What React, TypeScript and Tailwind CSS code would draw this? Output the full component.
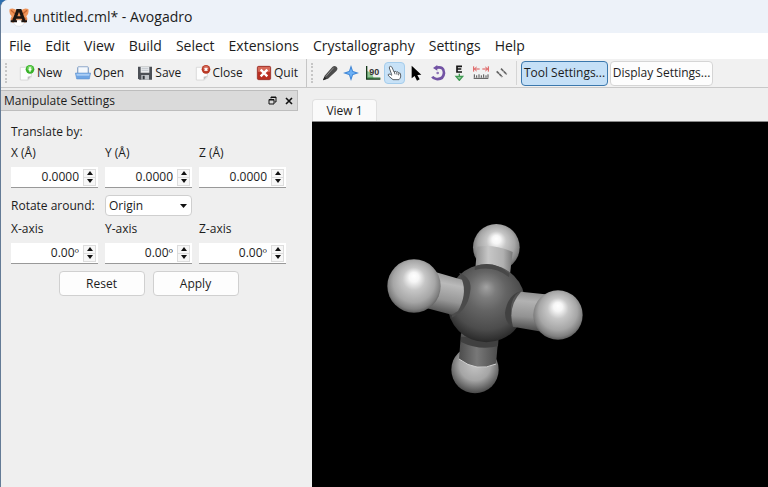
import { useState, type ReactNode } from "react";

const menus = ["File", "Edit", "View", "Build", "Select", "Extensions", "Crystallography", "Settings", "Help"];

function AppLogo() {
  return (
    <svg width="20" height="20" viewBox="0 0 60 60" aria-hidden="true">
      <path d="M2 6 Q16 0 26 14 L34 14 Q44 0 58 6 Q61 20 52 28 Q60 40 48 48 L12 48 Q0 40 8 28 Q-1 20 2 6Z" fill="#ee9358" />
      <path d="M6 10 L20 22 M54 10 L40 22 M8 38 L18 30 M52 38 L42 30" stroke="#c0622e" strokeWidth="4" />
      <path d="M14 44 Q30 34 46 44 Q45 58 30 58 Q15 58 14 44Z" fill="#fff" stroke="#d5d9df" strokeWidth="2" />
      <path d="M22 6 H37 L49 40 H54 V46 H37 V40 H40 L38 35 H22 L20 40 H24 V46 H5 V40 H10 L21 11Z M30 15 L25 28 H35Z" fill="#1c1511" fillRule="evenodd" />
    </svg>
  );
}

function PageIcon({ close = false }: { close?: boolean }) {
  return (
    <svg width="16" height="16" viewBox="0 0 48 48" aria-hidden="true">
      <path d="M4 7 H37 V36 L28 45 H4Z" fill="#fdfdfd" stroke="#cdcdcd" strokeWidth="2" />
      <path d="M37 33 L26 45 V35Z" fill="#bdbdbd" />
      <circle cx="33" cy="13" r="13" fill={close ? "#b93a26" : "#38b229"} />
      <circle cx="33" cy="10" r="8" fill={close ? "#d3695a" : "#78d764"} />
      {close ? <path d="M29 9 L37 17 M37 9 L29 17" stroke="#fff" strokeWidth="4" /> : <path d="M33 6 V20 M29 13 H37" stroke="#fff" strokeWidth="4" />}
    </svg>
  );
}

function OpenIcon() {
  return (
    <svg width="16" height="16" viewBox="0 0 48 48" aria-hidden="true">
      <path d="M6 8 L10 4 H38 L42 8 V28 H6Z" fill="#8fa9cb" />
      <path d="M10 7 H38 V26 H10Z" fill="#f4f8fc" />
      <path d="M1 24 H47 L43 42 H5Z" fill="#6fa5e4" stroke="#568bc8" strokeWidth="1.5" />
      <path d="M4 26 H44 L43 32 H5Z" fill="#a9cdf5" />
    </svg>
  );
}

function SaveIcon() {
  return (
    <svg width="16" height="16" viewBox="0 0 48 48" aria-hidden="true">
      <path d="M3 5 H45 V44 H7 L3 40Z" fill="#4b4f55" />
      <path d="M11 5 H37 V23 H11Z" fill="#e8eaed" />
      <path d="M14 10 H34 M14 16 H34" stroke="#a9b0b8" strokeWidth="2" />
      <path d="M13 30 H36 V44 H13Z" fill="#c0c4c9" />
      <path d="M17 32 H23 V43 H17Z" fill="#33373c" />
    </svg>
  );
}

function QuitIcon() {
  return (
    <svg width="16" height="16" viewBox="0 0 48 48" aria-hidden="true">
      <rect x="4" y="4" width="40" height="40" rx="4" fill="#b92f22" stroke="#8c2018" strokeWidth="2" />
      <path d="M6 6 H42 V20 Q24 24 6 20Z" fill="#d76958" />
      <path d="M14 14 L34 34 M34 14 L14 34" stroke="#fff" strokeWidth="7" />
    </svg>
  );
}

const tools: { name: string; icon: ReactNode }[] = [
  { name: "Draw", icon: <><path d="M3 46 L8 32 L31 6 Q37 0 44 6 Q49 12 43 18 L18 41Z" fill="#4c4c4c" /><path d="M12 34 L35 8" stroke="#8c8c8c" strokeWidth="3" /><path d="M3 46 L7 35 L14 41Z" fill="#222" /></> },
  { name: "Navigate", icon: <><path d="M24 0 L30 18 L48 24 L30 30 L24 48 L18 30 L0 24 L18 18Z" fill="#3d84d4" /><path d="M24 9 L28 20 L39 24 L28 28 L24 39 L20 28 L9 24 L20 20Z" fill="#6bb0f5" /></> },
  { name: "Bond-centric", icon: <><path d="M6 42 V18 Q24 22 26 42Z" fill="#8fc695" /><path d="M5 3 V42 H46" fill="none" stroke="#16391b" strokeWidth="4" /><path d="M7 39 H46" stroke="#2e7a38" strokeWidth="3" /><text x="13" y="29" fontSize="27" fontWeight="700" fill="#353535" fontFamily="Liberation Sans, sans-serif">90</text></> },
  { name: "Manipulate", icon: <path d="M17 29 L10 9 Q9 4 14 4 Q17 4 19 9 L24 21 Q27 16 31 21 Q36 18 38 24 Q44 22 44 30 V36 Q42 41 39 44 H21 L8 33 Q4 28 9 27 Q13 27 17 31Z M25 21 L27 28 M32 22 L33 29 M38 25 V31" fill="#fff" stroke="#5c6268" strokeWidth="3" /> },
  { name: "Select", icon: <path d="M11 2 V40 L20 33 L27 47 L35 43 L28 30 L40 29Z" fill="#000" /> },
  { name: "Auto rotate", icon: <><path d="M19 8 Q42 3 42 24 Q40 44 19 42 Q10 41 7 35" fill="none" stroke="#7253a4" strokeWidth="8" /><path d="M22 0 V17 L9 9Z" fill="#7253a4" /><circle cx="23" cy="24" r="4" fill="#8d75b5" /></> },
  { name: "Optimize", icon: <><path d="M33 4 H18 V21 H33 M18 12 H31" fill="none" stroke="#151515" strokeWidth="5" /><path d="M25 26 V32 M25 46 L15 34 H35Z" fill="#8fcb9b" stroke="#3f9a52" strokeWidth="4" /></> },
  { name: "Measure", icon: <><path d="M2 4 V20 M46 4 V20 M4 12 H20 M28 12 H44 M11 6 L4 12 L11 18 M37 6 L44 12 L37 18" fill="none" stroke="#dd5555" strokeWidth="3" /><path d="M2 40 H46 M4 28 V38 M11 31 V38 M18 28 V38 M25 31 V38 M32 28 V38 M39 31 V38 M45 28 V38" stroke="#4c4c4c" strokeWidth="3" /></> },
  { name: "Align", icon: <path d="M8 19 L25 36 M21 11 L38 28" stroke="#646464" strokeWidth="5" strokeDasharray="10 1" /> },
];

function Grip() {
  return <div className="h-5 border-l-2 border-dotted border-[#c6c6c6]" />;
}

function SpinBox({ id, label, initial, unit, digits }: { id: string; label: string; initial: number; unit: string; digits: number }) {
  const [value, setValue] = useState(initial.toFixed(digits) + unit);
  const step = (amount: number) => setValue(((parseFloat(value) || 0) + amount).toFixed(digits) + unit);
  return (
    <div className="w-[87px]">
      <label htmlFor={id} className="block h-6 leading-5">{label}</label>
      <div className="flex h-[21px] items-center border-b border-[#999] bg-white pr-0.5">
        <input id={id} value={value} onChange={(e) => setValue(e.target.value)} className="w-0 grow bg-transparent pr-1 text-right outline-none" />
        <div className="flex h-[17px] w-[13px] flex-col border border-[#ddd] bg-[#f7f7f7]">
          <button type="button" aria-label={`Increase ${label}`} onClick={() => step(1)} className="flex flex-1 items-center justify-center border-b border-[#ddd]">
            <svg width="6" height="4" viewBox="0 0 6 4"><path d="M0 4 L3 0 L6 4Z" fill="#111" /></svg>
          </button>
          <button type="button" aria-label={`Decrease ${label}`} onClick={() => step(-1)} className="flex flex-1 items-center justify-center">
            <svg width="6" height="4" viewBox="0 0 6 4"><path d="M0 0 L3 4 L6 0Z" fill="#111" /></svg>
          </button>
        </div>
      </div>
    </div>
  );
}

function Methane() {
  return (
    <svg width="230" height="200" viewBox="0 0 690 600" role="img" aria-label="Ball and stick model of methane">
      <defs>
        <radialGradient id="hydrogen" cx="50%" cy="46%" r="56%" fx="50%" fy="31%">
          <stop offset="0" stopColor="#fff" />
          <stop offset=".16" stopColor="#f6f6f6" />
          <stop offset=".38" stopColor="#c6c6c6" />
          <stop offset=".7" stopColor="#a6a6a6" />
          <stop offset=".88" stopColor="#808080" />
          <stop offset="1" stopColor="#505050" />
        </radialGradient>
        <radialGradient id="lowerHydrogen" cx="50%" cy="40%" r="60%">
          <stop offset="0" stopColor="#c4c4c4" />
          <stop offset=".55" stopColor="#a5a5a5" />
          <stop offset="1" stopColor="#484848" />
        </radialGradient>
        <radialGradient id="carbon" cx="50%" cy="42%" r="60%" fx="50%" fy="29%">
          <stop offset="0" stopColor="#a2a2a2" />
          <stop offset=".2" stopColor="#7c7c7c" />
          <stop offset=".42" stopColor="#646464" />
          <stop offset=".75" stopColor="#4c4c4c" />
          <stop offset="1" stopColor="#242424" />
        </radialGradient>
        <linearGradient id="leftBond" gradientUnits="userSpaceOnUse" x1="240" y1="192" x2="215" y2="312">
          <stop offset="0" stopColor="#969696" />
          <stop offset=".25" stopColor="#bababa" />
          <stop offset=".65" stopColor="#969696" />
          <stop offset="1" stopColor="#4c4c4c" />
        </linearGradient>
        <linearGradient id="rightBond" gradientUnits="userSpaceOnUse" x1="480" y1="245" x2="470" y2="362">
          <stop offset="0" stopColor="#8c8c8c" />
          <stop offset=".25" stopColor="#b2b2b2" />
          <stop offset=".65" stopColor="#929292" />
          <stop offset="1" stopColor="#4a4a4a" />
        </linearGradient>
        <linearGradient id="topBond" x1="0" y1="0" x2="1" y2="0">
          <stop offset="0" stopColor="#8a8a8a" />
          <stop offset=".35" stopColor="#c7c7c7" />
          <stop offset=".75" stopColor="#b0b0b0" />
          <stop offset="1" stopColor="#777" />
        </linearGradient>
        <linearGradient id="bottomBond" x1="0" y1="0" x2="1" y2="0">
          <stop offset="0" stopColor="#4c4c4c" />
          <stop offset=".45" stopColor="#787878" />
          <stop offset="1" stopColor="#4a4a4a" />
        </linearGradient>
      </defs>
      <circle cx="379" cy="112" r="70" fill="url(#hydrogen)" />
      <path d="M322 110 Q375 102 428 126 L419 200 L315 185Z" fill="url(#topBond)" />
      <circle cx="315" cy="479" r="71" fill="url(#lowerHydrogen)" />
      <path d="M273 370 H386 L378 462 Q323 488 267 447Z" fill="url(#bottomBond)" />
      <path d="M273 380 H386 L384 409 Q326 422 273 396Z" fill="#404040" />
      <path d="M267 447 Q320 488 378 462" fill="none" stroke="#d2d2d2" strokeWidth="3" />
      <circle cx="349" cy="280" r="117" fill="url(#carbon)" />
      <path d="M315 169 Q370 148 418 191 L417 201 Q370 165 314 180Z" fill="#484848" />
      <path d="M268 188 Q310 205 300 248 Q293 300 245 323 L249 300 Q292 256 268 188Z" fill="#4b4b4b" />
      <path d="M196 186 L276 209 Q292 252 264 303 L245 314 L160 292Z" fill="url(#leftBond)" />
      <circle cx="132" cy="228" r="80" fill="url(#hydrogen)" />
      <path d="M454 244 Q414 252 405 308 Q406 344 434 352 L446 350 Q415 315 425 280 Q433 250 454 244Z" fill="#414141" />
      <path d="M453 245 L525 253 L520 366 L429 350 Q412 291 453 245Z" fill="url(#rightBond)" />
      <circle cx="564" cy="315" r="74" fill="url(#hydrogen)" />
    </svg>
  );
}

export default function App() {
  const [tool, setTool] = useState("Manipulate");
  const actions = [
    { label: "New", icon: <PageIcon /> },
    { label: "Open", icon: <OpenIcon /> },
    { label: "Save", icon: <SaveIcon /> },
    { label: "Close", icon: <PageIcon close /> },
    { label: "Quit", icon: <QuitIcon /> },
  ];
  return (
    <div className="h-screen bg-[#2d6fb0]">
      <div className="flex h-full flex-col overflow-hidden rounded-tl-lg border-l border-[#647b96] bg-[#efefef] font-['Open_Sans',sans-serif] text-xs text-[#1c1c1c]">
        <header className="flex h-[33px] shrink-0 items-center gap-1 bg-[#edf2f9] pl-2">
          <AppLogo />
          <h1 className="text-sm">untitled.cml* - Avogadro</h1>
        </header>
        <nav className="flex h-[26px] shrink-0 items-center gap-3.5 bg-white pl-2 text-sm">
          {menus.map((m) => <button key={m} type="button">{m}</button>)}
        </nav>
        <div className="flex h-[29px] shrink-0 items-center border-b border-[#c8c8c8] bg-[#f1f1f1] pl-1">
          <Grip />
          <div className="flex w-[291px] items-center justify-between pl-3">
            {actions.map((a) => (
              <button key={a.label} type="button" className="flex items-center gap-0.5">{a.icon}{a.label}</button>
            ))}
          </div>
          <div className="mr-1 ml-2 h-7 border-l border-[#c6c6c6]" />
          <Grip />
          <div className="ml-1.5 grid w-[194px] grid-cols-9">
            {tools.map((t) => (
              <button key={t.name} type="button" aria-label={t.name} aria-pressed={tool === t.name} onClick={() => setTool(t.name)} className={`flex h-[22px] items-center justify-center rounded-sm border ${tool === t.name ? "border-[#a5cdec] bg-[#c8e2f7]" : "border-transparent"}`}>
                <svg width="16" height="16" viewBox="0 0 48 48" className="shrink-0" aria-hidden="true">{t.icon}</svg>
              </button>
            ))}
          </div>
          <div className="mr-1 ml-[3px] h-6 border-l border-[#d5d5d5]" />
          <button type="button" className="h-[25px] w-[87px] shrink-0 rounded border border-[#3b78ad] bg-[#c5e0f7] whitespace-nowrap">Tool Settings...</button>
          <button type="button" className="ml-0.5 h-[25px] w-[103px] shrink-0 rounded border border-[#d5d5d5] bg-[#fdfdfd] whitespace-nowrap">Display Settings...</button>
        </div>
        <main className="flex min-h-0 grow">
          <aside className="w-[311px] shrink-0 pt-0.5 pr-3.5">
            <div className="flex h-[21px] items-center border border-l-0 border-[#bdbdbd] bg-[#dadada] pr-1 pl-[3px]">
              <h2 className="grow">Manipulate Settings</h2>
              <button type="button" aria-label="Float panel" className="mr-2">
                <svg width="9" height="9" viewBox="0 0 9 9" fill="none" stroke="#111"><path d="M3 2.5 V1 H8 V6 H6.5 M1 3.5 H6 V8 H1Z M1 4 H6 M3 1.5 H8" /></svg>
              </button>
              <button type="button" aria-label="Close panel">
                <svg width="8" height="8" viewBox="0 0 8 8"><path d="M1 1 L7 7 M7 1 L1 7" stroke="#111" strokeWidth="1.6" /></svg>
              </button>
            </div>
            <form className="pt-[11px] pl-2.5" onSubmit={(e) => e.preventDefault()}>
              <p className="h-[21px] leading-5">Translate by:</p>
              <div className="flex gap-[7px]">
                {["X", "Y", "Z"].map((a) => <SpinBox key={a} id={`move-${a}`} label={`${a} (Å)`} initial={0} unit="" digits={4} />)}
              </div>
              <div className="mt-[7px] flex items-center gap-[7px]">
                <label htmlFor="pivot" className="w-[87px]">Rotate around:</label>
                <div className="grid items-center">
                  <select id="pivot" className="col-start-1 row-start-1 h-[21px] w-[87px] appearance-none rounded-sm border border-[#cfcfcf] bg-white pl-[3px]">
                    <option>Origin</option>
                    <option>Selection</option>
                  </select>
                  <svg width="7" height="4" viewBox="0 0 7 4" className="pointer-events-none col-start-1 row-start-1 mr-[5px] justify-self-end"><path d="M0 0 H7 L3.5 4Z" fill="#111" /></svg>
                </div>
              </div>
              <div className="mt-[3px] flex gap-[7px]">
                {["X", "Y", "Z"].map((a) => <SpinBox key={a} id={`turn-${a}`} label={`${a}-axis`} initial={0} unit="º" digits={2} />)}
              </div>
              <div className="mt-[7px] flex w-[275px] justify-center gap-2">
                <button type="reset" className="h-[25px] w-[86px] rounded border border-[#d0d0d0] bg-[#fdfdfd]">Reset</button>
                <button type="submit" className="h-[25px] w-[86px] rounded border border-[#d0d0d0] bg-[#fdfdfd]">Apply</button>
              </div>
            </form>
          </aside>
          <section className="flex grow flex-col pt-[11px]">
            <button type="button" className="h-[22px] w-[65px] rounded-t-sm border border-b-0 border-[#e0e0e0] bg-[#fafafa]">View 1</button>
            <div className="grow border-t border-[#888] bg-black pt-[88px] pl-[58px]">
              <Methane />
            </div>
          </section>
        </main>
      </div>
    </div>
  );
}
